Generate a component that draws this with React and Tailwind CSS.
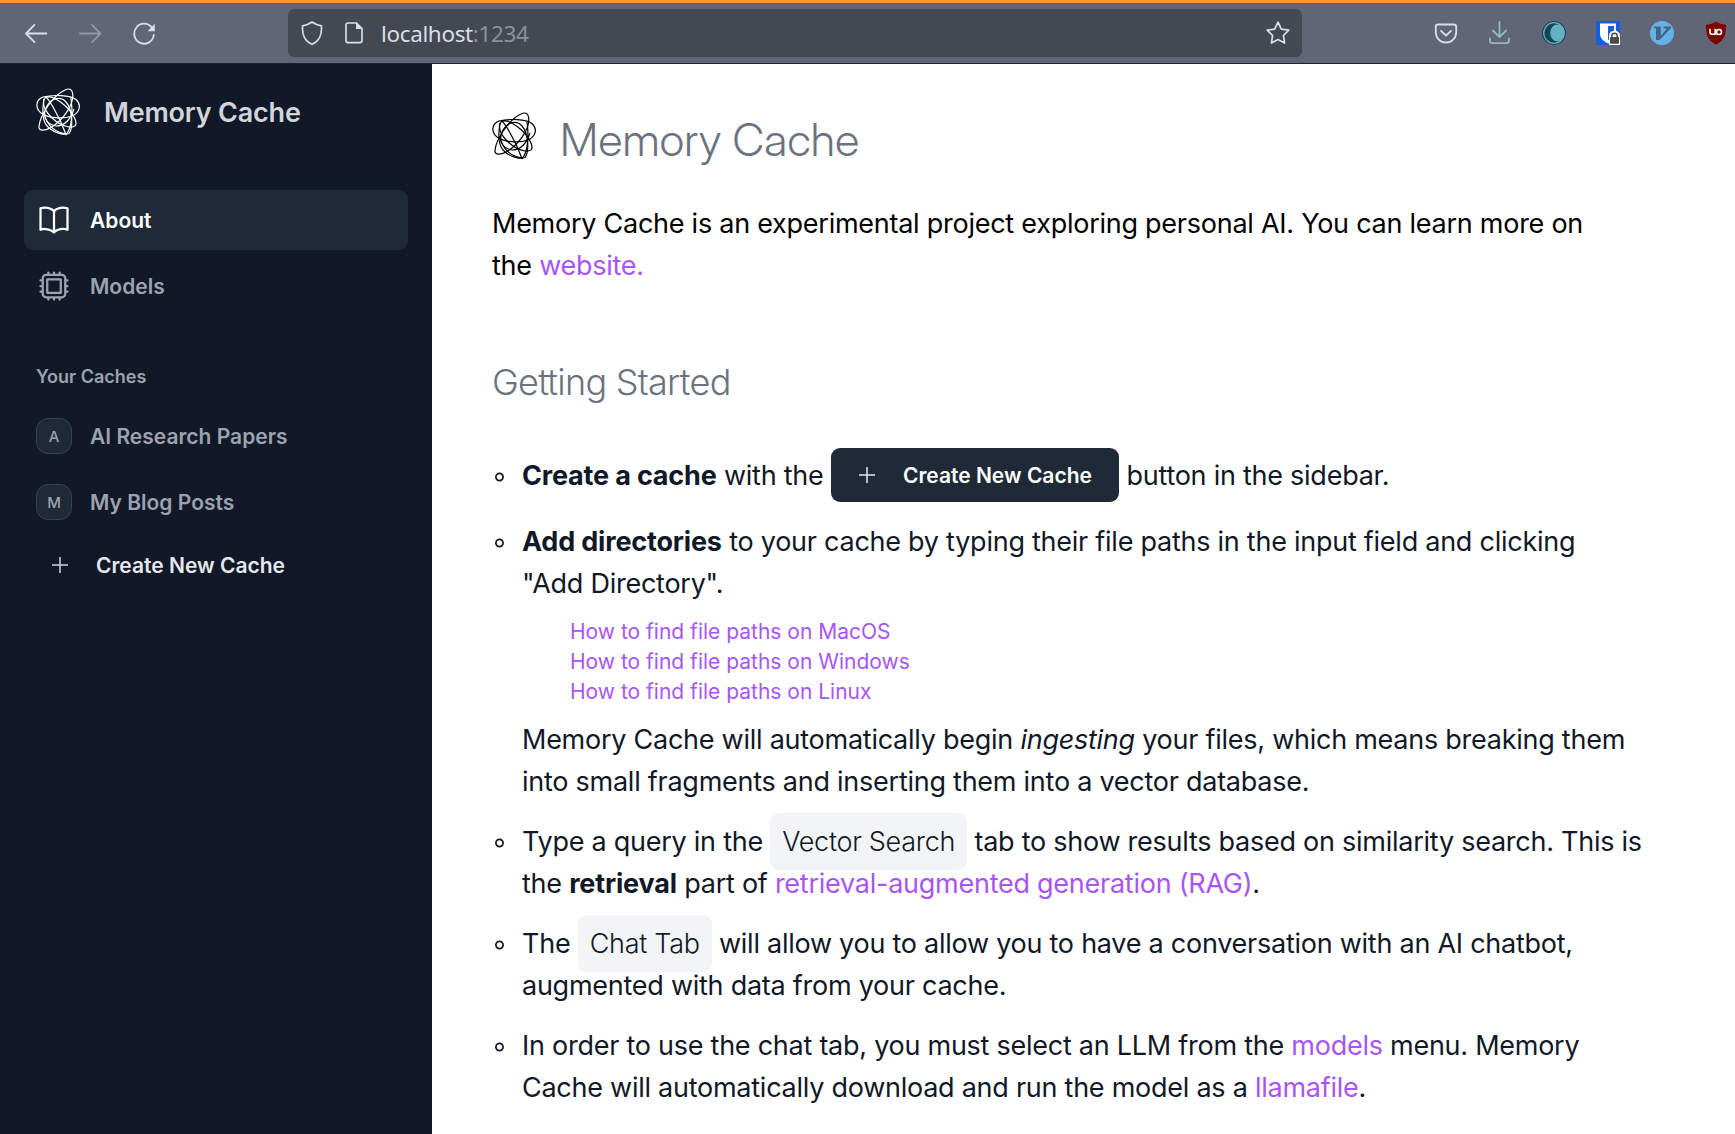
import React from "react";

function Scribble({ className }) {
  return (
    <svg viewBox="0 0 44 48" className={className} fill="none" stroke="currentColor" strokeWidth="1.2">
      <path d="M7 9C17 6.500 34 7 40 11.500C46 17 43.500 25 36 28C26 31.500 12 30 5 25C-1 20 -.500 12 7 9Z" />
      <path d="M36.500 5C38.500 15 29 30 16 39C9 43 2.500 43.500 3 38.500C4 27 17 7.500 29 2C33 0 36 1 36.500 5Z" />
      <path d="M9.500 9.500C17 6 34 19 39 31C42 38 38 39.500 33 39C21 37 7 24 7.500 14C7.500 12 8 10.500 9.500 9.500Z" />
      <path d="M8 11C6 24 6 34 13 40C19 45 28 47.500 33 45.500C37 41 37 22 30 14C25 8 16 9.500 11 18C6 27 9 36 20 38" />
      <path d="M9 9C11 7 24 30 30 46.500C36 41 37 24 35 10" />
      <path d="M20 38C28 38 34 33 38 21" />
      <path d="M8 24C10 38 20 45 31 46" />
    </svg>
  );
}

function BookIcon() {
  return (
    <svg viewBox="0 0 24 24" className="size-9 shrink-0" fill="none" stroke="currentColor" strokeWidth="1.5" strokeLinecap="round" strokeLinejoin="round">
      <path d="M12 6.042A8.967 8.967 0 0 0 6 3.75c-1.052 0-2.062.18-3 .512v14.25A8.987 8.987 0 0 1 6 18c2.305 0 4.408.867 6 2.292m0-14.25a8.966 8.966 0 0 1 6-2.292c1.052 0 2.062.18 3 .512v14.25A8.987 8.987 0 0 0 18 18a8.967 8.967 0 0 0-6 2.292m0-14.25v14.25" />
    </svg>
  );
}

function ChipIcon() {
  return (
    <svg viewBox="0 0 24 24" className="size-9 shrink-0" fill="none" stroke="currentColor" strokeWidth="1.5" strokeLinecap="round" strokeLinejoin="round">
      <path d="M8.25 3v1.5M4.5 8.25H3m18 0h-1.5M4.5 12H3m18 0h-1.5m-15 3.75H3m18 0h-1.5M8.25 19.5V21M12 3v1.5m0 15V21m3.75-18v1.5m0 15V21m-9-1.5h10.5a2.25 2.25 0 0 0 2.25-2.25V6.75a2.25 2.25 0 0 0-2.25-2.25H6.75A2.25 2.25 0 0 0 4.5 6.75v10.5a2.25 2.25 0 0 0 2.25 2.25Zm.75-12h9v9h-9v-9Z" />
    </svg>
  );
}

function PlusIcon({ className }) {
  return (
    <svg viewBox="0 0 18 18" className={className} fill="none" stroke="currentColor" strokeWidth="1.5">
      <path d="M9 1v16M1 9h16" />
    </svg>
  );
}

function BrowserBar() {
  return (
    <header className="flex h-16 shrink-0 items-center border-t-3 border-b border-t-[#ff9632] border-b-[#1c2333] bg-[#616677] pl-6 text-[#d8dee9]">
      <div className="flex w-[264px] items-center gap-[30px]">
        <svg viewBox="0 0 24 24" className="size-6" fill="none" stroke="currentColor" strokeWidth="1.8" strokeLinecap="round" strokeLinejoin="round">
          <path d="M22.4 12.500H2.500M10.500 3.800L2 12.500l8.500 8.700" />
        </svg>
        <svg viewBox="0 0 24 24" className="size-6 opacity-40" fill="none" stroke="currentColor" strokeWidth="1.8" strokeLinecap="round" strokeLinejoin="round">
          <path d="M2 12.500H22M14 3.800l8.500 8.700-8.500 8.700" />
        </svg>
        <svg viewBox="0 0 24 24" className="size-6" fill="none" stroke="currentColor" strokeWidth="1.8" strokeLinecap="round">
          <path d="M20 6.800A9.800 10 0 1 0 21.800 14" />
          <path d="M22.800 2.800v7.400h-7.200z" fill="currentColor" stroke="none" />
        </svg>
      </div>
      <div className="flex h-12 w-[1014px] items-center rounded-[6px] bg-[#434851] pr-3 pl-3">
        <svg viewBox="0 0 24 24" className="size-6" fill="none" stroke="currentColor" strokeWidth="1.7" strokeLinejoin="round">
          <path d="M12 1 C9.200 3 6 4.300 2.600 4.900C1.900 13 4.800 20.500 12 23.200C19.200 20.500 22.100 13 21.400 4.900C18 4.300 14.800 3 12 1Z" />
        </svg>
        <svg viewBox="0 0 18 24" className="ml-[21px] h-6 w-[18px]" fill="none" stroke="currentColor" strokeWidth="1.7" strokeLinejoin="round">
          <path d="M3 2h8.500l5.500 5.500v12.100a2 2 0 0 1-2 2H3a2 2 0 0 1-2-2V4a2 2 0 0 1 2-2Z" />
          <path d="M11 1.500v6.500h6z" fill="currentColor" stroke="none" />
        </svg>
        <span className="ml-[18px] pt-0.5 font-['Noto_Sans'] text-[22.500px] leading-[32px] tracking-[-0.36px]">
          localhost<span className="text-[#8b909a]">:1234</span>
        </span>
        <svg viewBox="0 0 24 24" className="ml-auto size-6" fill="none" stroke="currentColor" strokeWidth="1.700" strokeLinejoin="round">
          <path d="M12 1.200l3.300 6.900 7.500 1.100-5.400 5.300 1.200 7.600L12 18.500l-6.600 3.600 1.200-7.600L1.200 9.200l7.500-1.100z" />
        </svg>
      </div>
      <div className="ml-[132px] flex items-center gap-[30px]">
        <svg viewBox="0 0 24 24" className="size-6 shrink-0" fill="none" stroke="currentColor" strokeWidth="1.800" strokeLinecap="round" strokeLinejoin="round">
          <path d="M4 3.500h16a2.200 2.200 0 0 1 2.200 2.200v5.600a10.200 10.200 0 0 1-20.400 0V5.700A2.200 2.200 0 0 1 4 3.500Z" />
          <path d="M7 9.800l5 4.700 5-4.700" />
        </svg>
        <svg viewBox="0 0 24 24" className="size-6 shrink-0 text-[#8fbcbb]" fill="none" stroke="currentColor" strokeWidth="1.800" strokeLinecap="round" strokeLinejoin="round">
          <path d="M11.500 1v14.500M4.800 9.500l6.700 6.500 6.700-6.500M2 17.500v2.300a2.400 2.400 0 0 0 2.400 2.400h14.200a2.400 2.400 0 0 0 2.400-2.400v-2.300" />
        </svg>
        <svg viewBox="0 0 24 24" className="size-6 shrink-0">
          <circle cx="12" cy="12" r="11.800" fill="#173043" />
          <circle cx="12" cy="12" r="10.300" fill="#144556" stroke="#62b1c0" strokeWidth="1.300" />
          <ellipse cx="15.200" cy="12" rx="7" ry="8.500" fill="#62b1c0" />
        </svg>
        <svg viewBox="0 0 24 24" className="size-6 shrink-0">
          <rect width="24" height="24" rx="1.500" fill="#175ddc" />
          <path d="M4 2.500h16v10c0 5-4 8-8 10-4-2-8-5-8-10z" fill="#fff" />
          <path d="M12 5h6v7c0 3-3 5.500-6 7z" fill="#175ddc" />
          <path d="M13 24V15a5.500 5.500 0 0 1 11 0V24z" fill="#fff" />
          <rect x="14" y="16" width="9" height="6.800" rx=".8" fill="#4a4a4a" />
          <path d="M15.800 17v-2a2.700 2.700 0 0 1 5.400 0v2" fill="none" stroke="#4a4a4a" strokeWidth="1.500" />
        </svg>
        <svg viewBox="0 0 24 24" className="size-6 shrink-0">
          <circle cx="12" cy="12" r="12" fill="#66b1e8" />
          <path d="M4 5.500h6.800v9.500L17 7.500h-3.500v-2H21v1.800L9.500 19H6V7.300H4z" fill="#45647f" />
        </svg>
        <svg viewBox="0 0 24 24" className="size-6 shrink-0">
          <path d="M12 .5c3 2.200 6.300 3 10 3.200 0 10.300-1.700 15.800-10 20C3.700 19.500 2 14 2 3.700 5.700 3.500 9 2.700 12 .5z" fill="#800000" />
          <path d="M6 7.800v3.500a2 2 0 0 0 2 2h3.200V7.800" fill="none" stroke="#fff" strokeWidth="1.600" />
          <circle cx="15" cy="11" r="2.500" fill="none" stroke="#fff" strokeWidth="1.600" />
        </svg>
      </div>
    </header>
  );
}

function Label({ children }) {
  return <span className="pt-0.5 leading-[34px]">{children}</span>;
}

function CacheItem({ name }) {
  return (
    <li className="flex items-center gap-[18px] p-3 text-[21px] leading-9 font-semibold text-[#9ca3af]">
      <span className="flex size-9 shrink-0 items-center justify-center rounded-[12px] border border-[#374151] bg-[#1f2937] pt-px text-[15px] font-medium">
        {name[0]}
      </span>
      <Label>{name}</Label>
    </li>
  );
}

function Sidebar() {
  return (
    <aside className="flex w-[432px] shrink-0 flex-col bg-[#111827] px-6 text-[#9ca3af]">
      <div className="flex h-24 items-center pl-3">
        <Scribble className="h-12 w-11 text-white" />
        <span className="ml-6 pt-0.5 text-[27px] leading-[42px] font-semibold tracking-[-0.2px] text-[#d1d5db]">Memory Cache</span>
      </div>
      <ul className="mt-[30px] space-y-1.5 text-[21px] leading-9 font-semibold">
        <li className="flex items-center gap-[18px] rounded-[9px] bg-[#1f2937] p-3 text-white">
          <BookIcon />
          <Label>About</Label>
        </li>
        <li className="flex items-center gap-[18px] p-3">
          <ChipIcon />
          <Label>Models</Label>
        </li>
      </ul>
      <div className="mt-[43px] pl-3 text-[18px] leading-9 font-semibold">Your Caches</div>
      <ul className="mt-[11px] space-y-1.5">
        <CacheItem name="AI Research Papers" />
        <CacheItem name="My Blog Posts" />
      </ul>
      <div className="mt-1.5 flex h-[54px] items-center pl-[27px] text-[21px] font-semibold text-[#e5e7eb]">
        <PlusIcon className="size-[18px] text-[#d1d5db]" />
        <span className="ml-[27px] pt-0.5 leading-[34px]">Create New Cache</span>
      </div>
    </aside>
  );
}

function Marker() {
  return (
    <span className="flex h-[42px] w-[30px] shrink-0 items-center self-start pt-0.5 pl-[3px]">
      <svg viewBox="0 0 10 10" className="size-[10px]" fill="none" stroke="#111827" strokeWidth="1.700">
        <circle cx="4.500" cy="5" r="3.600" />
      </svg>
    </span>
  );
}

function Bullet({ children }) {
  return (
    <li className="flex">
      <Marker />
      <div>{children}</div>
    </li>
  );
}

function Bold({ children }) {
  return <b className="tracking-[-0.18px]">{children}</b>;
}

function Link({ children }) {
  return <a className="text-[#a855f7]">{children}</a>;
}

function Tag({ children }) {
  return <span className="rounded-[9px] bg-[#f3f4f6] p-3 font-light tracking-[-0.3px]">{children}</span>;
}

function Main() {
  return (
    <main className="flex-1 overflow-hidden bg-white pt-12 pl-[60px] text-[27px] leading-[42px] tracking-[-0.255px] whitespace-nowrap text-[#111827]">
      <h1 className="flex font-['Inter_Display','Inter',sans-serif] text-[45px] leading-[54px] font-light tracking-[0.23px] text-[#6b7280]">
        <Scribble className="h-12 w-11 text-black" />
        <span className="ml-6 pt-px">Memory Cache</span>
      </h1>
      <p className="mt-9 text-black">
        Memory Cache is an experimental project exploring personal AI. You can learn more on
        <br />
        the <Link>website.</Link>
      </p>
      <h2 className="mt-[71px] text-[36px] leading-[48px] font-light tracking-[-0.74px] text-[#6b7280]">Getting Started</h2>
      <ul className="mt-[42px] space-y-[18px]">
        <li className="mb-[19px] flex h-[54px] items-center">
          <span className="pt-0.5">
            <Marker />
          </span>
          <div className="flex items-center gap-[7.500px]">
            <span className="pt-0.5">
              <Bold>Create a cache</Bold> with the
            </span>
            <span className="flex h-[54px] w-[288px] items-center rounded-[9px] bg-[#1f2937] pl-[27px] text-[21px] font-semibold tracking-normal text-white">
              <PlusIcon className="size-[18px] text-[#e5e7eb]" />
              <span className="ml-[27px] pt-0.5">Create New Cache</span>
            </span>
            <span className="pt-0.5">button in the sidebar.</span>
          </div>
        </li>
        <Bullet>
          <Bold>Add directories</Bold> to your cache by typing their file paths in the input field and clicking
          <br />
          "Add Directory".
          <ul className="my-3 pl-12 text-[21px] leading-[30px] tracking-normal">
            <li><Link>How to find file paths on MacOS</Link></li>
            <li><Link>How to find file paths on Windows</Link></li>
            <li><Link>How to find file paths on Linux</Link></li>
          </ul>
          Memory Cache will automatically begin <i>ingesting</i> your files, which means breaking them
          <br />
          into small fragments and inserting them into a vector database.
        </Bullet>
        <Bullet>
          Type a query in the <Tag>Vector Search</Tag> tab to show results based on similarity search. This is
          <br />
          <span className="relative">the <Bold>retrieval</Bold> part of <Link>retrieval-augmented generation (RAG)</Link>.</span>
        </Bullet>
        <Bullet>
          The <Tag>Chat Tab</Tag> will allow you to allow you to have a conversation with an AI chatbot,
          <br />
          <span className="relative">augmented with data from your cache.</span>
        </Bullet>
        <Bullet>
          In order to use the chat tab, you must select an LLM from the <Link>models</Link> menu. Memory
          <br />
          Cache will automatically download and run the model as a <Link>llamafile</Link>.
        </Bullet>
      </ul>
    </main>
  );
}

export default function App() {
  return (
    <div className="flex h-screen w-full flex-col overflow-hidden font-['Inter',sans-serif]">
      <BrowserBar />
      <div className="flex min-h-0 flex-1">
        <Sidebar />
        <Main />
      </div>
    </div>
  );
}
